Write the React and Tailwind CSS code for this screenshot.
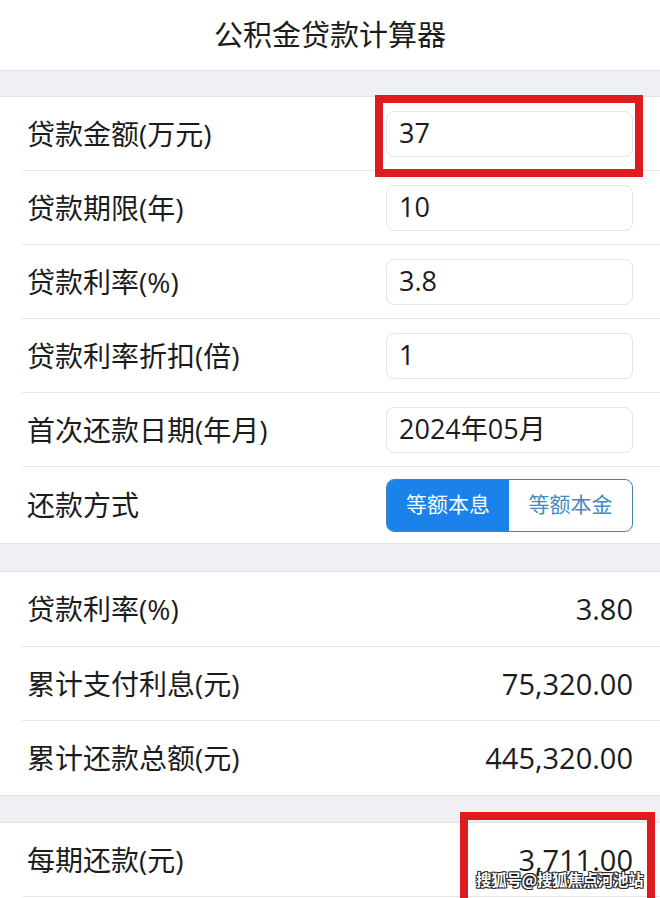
import React from "react";

const FONT = "font-['Open_Sans','Noto_Sans_CJK_SC',sans-serif]";

const formRows = [
  { label: "贷款金额(万元)", value: "37" },
  { label: "贷款期限(年)", value: "10" },
  { label: "贷款利率(%)", value: "3.8" },
  { label: "贷款利率折扣(倍)", value: "1" },
  { label: "首次还款日期(年月)", value: "2024年05月" },
];

const results = [
  { label: "贷款利率(%)", value: "3.80" },
  { label: "累计支付利息(元)", value: "75,320.00" },
  { label: "累计还款总额(元)", value: "445,320.00" },
];

const Band = ({ h }) => (
  <div className={`${h} bg-[#efeff4] border-y border-[#e2e2e6]`} />
);

const App = () => {
  return (
    <div
      className={`relative w-[660px] h-[898px] overflow-hidden bg-white text-[#1c1c1c] ${FONT}`}
    >
      <div className="h-[70px] flex items-center justify-center text-[29px]">
        公积金贷款计算器
      </div>
      <Band h="h-[27px]" />

      {formRows.map((row) => (
        <div
          key={row.label}
          className="h-[74px] ml-[22px] pl-[5px] pr-[27px] flex items-center justify-between border-b border-[#e6e6e6]"
        >
          <span className="text-[28px]">{row.label}</span>
          <div className="w-[247px] h-[46px] rounded-lg border border-[#e4e4e4] flex items-center pl-[12px] text-[27px]">
            {row.value}
          </div>
        </div>
      ))}
      <div className="h-[76px] ml-[22px] pl-[5px] pr-[27px] flex items-center justify-between">
        <span className="text-[28px]">还款方式</span>
        <div className="w-[247px] h-[53px] rounded-lg border-[1.5px] border-[#4b82ad] flex overflow-hidden text-[21px]">
          <div className="w-[122px] bg-[#1a82ea] text-white flex items-center justify-center">
            等额本息
          </div>
          <div className="flex-1 text-[#3f8bbf] flex items-center justify-center">
            等额本金
          </div>
        </div>
      </div>

      <Band h="h-[29px]" />

      {results.map((row, i) => (
        <div
          key={row.label}
          className={`${i === 0 ? "h-[75px]" : "h-[74px]"} ml-[22px] pl-[5px] pr-[27px] flex items-center justify-between ${
            i < results.length - 1 ? "border-b border-[#e6e6e6]" : ""
          }`}
        >
          <span className="text-[28px]">{row.label}</span>
          <span className="text-[29px]">{row.value}</span>
        </div>
      ))}

      <Band h="h-[28px]" />

      <div className="h-[74px] ml-[22px] pl-[5px] pr-[27px] flex items-center justify-between border-b border-[#e6e6e6]">
        <span className="text-[28px]">每期还款(元)</span>
        <span className="text-[29px]">3,711.00</span>
      </div>

      {/* red annotation boxes */}
      <div className="absolute left-[375px] top-[95px] w-[268px] h-[82px] border-[8px] border-[#de1b1e]" />
      <div className="absolute left-[460px] top-[812px] w-[195px] h-[110px] border-[8px] border-[#de1b1e]" />

      {/* watermark */}
      <div className="absolute left-[476px] top-[869px] text-[15.5px] leading-[20px] font-bold text-white tracking-[-0.3px] [text-shadow:-1px_-1px_0_#222,1px_-1px_0_#222,-1px_1px_0_#222,1px_1px_0_#222] font-['Noto_Sans_CJK_SC',sans-serif]">
        搜狐号@搜狐焦点河池站
      </div>
    </div>
  );
};

export default App;
